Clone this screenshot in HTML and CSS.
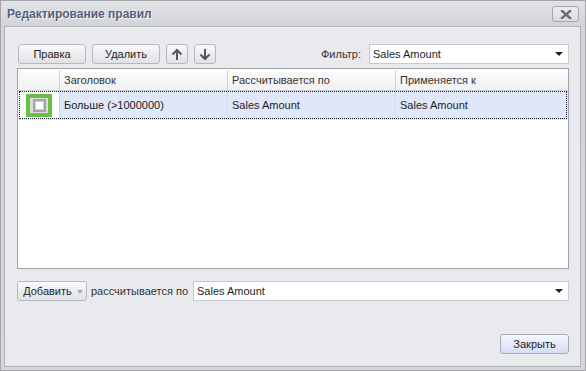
FILE: index.html
```html
<!DOCTYPE html>
<html lang="ru">
<head>
  <meta charset="UTF-8">
  <title>Редактирование правил</title>
  <link rel="stylesheet" href="styles.css">
</head>
<body>
  <div class="window">
    <div class="titlebar">
      <span class="title">Редактирование правил</span>
      <button class="close-x" aria-label="Закрыть">
        <svg width="12" height="9" viewBox="0 0 12 9"><path d="M2 1 L10 8 M10 1 L2 8" stroke="#6b6b73" stroke-width="2.4" stroke-linecap="square"/></svg>
      </button>
    </div>

    <div class="content">
      <div class="toolbar">
        <button class="btn btn-wide">Правка</button>
        <button class="btn btn-wide">Удалить</button>
        <button class="btn btn-icon" aria-label="Вверх">
          <svg width="12" height="13" viewBox="0 0 12 13"><path d="M6 12 V2 M1.5 6.5 L6 2 L10.5 6.5" fill="none" stroke="#555" stroke-width="2"/></svg>
        </button>
        <button class="btn btn-icon" aria-label="Вниз">
          <svg width="12" height="13" viewBox="0 0 12 13"><path d="M6 1 V11 M1.5 6.5 L6 11 L10.5 6.5" fill="none" stroke="#555" stroke-width="2"/></svg>
        </button>
        <span class="filter-label">Фильтр:</span>
        <div class="combo combo-filter">
          <span>Sales Amount</span>
          <span class="caret"></span>
        </div>
      </div>

      <div class="grid">
        <div class="grid-row grid-head">
          <div class="cell cell-ind"></div>
          <div class="cell cell-col">Заголовок</div>
          <div class="cell cell-col">Рассчитывается по</div>
          <div class="cell cell-col cell-last">Применяется к</div>
        </div>
        <div class="grid-row grid-data">
          <div class="cell cell-ind">
            <span class="check-focus"><span class="check"></span></span>
          </div>
          <div class="cell cell-col">Больше (&gt;1000000)</div>
          <div class="cell cell-col">Sales Amount</div>
          <div class="cell cell-col cell-last">Sales Amount</div>
          <div class="focus-rect"></div>
        </div>
      </div>

      <div class="add-row">
        <button class="btn btn-add">Добавить <span class="caret caret-light"></span></button>
        <span class="add-label">рассчитывается по</span>
        <div class="combo combo-add">
          <span>Sales Amount</span>
          <span class="caret"></span>
        </div>
      </div>

      <div class="footer">
        <button class="btn btn-default">Закрыть</button>
      </div>
    </div>
  </div>
</body>
</html>
```

FILE: styles.css
```css
body {
  margin: 0;
  font-family: 'Liberation Sans', Arial, sans-serif;
  font-size: 11px;
  color: #1e1e1e;
}
.window {
  width: 586px;
  height: 371px;
  box-sizing: border-box;
  border: 1px solid #a4a5ab;
  background: linear-gradient(#e2e2e6, #d3d4d9 25px, #d6d7dc);
  padding: 0 4px 3px 3px;
  display: flex;
  flex-direction: column;
}
.titlebar {
  height: 25px;
  display: flex;
  align-items: center;
  justify-content: space-between;
  padding: 0 2px 0 3px;
}
.title {
  font-weight: bold;
  font-size: 12px;
  color: #55617c;
  text-shadow: 1px 1px 0 #f4f4f6;
  margin-top: 1px;
}
.close-x {
  width: 27px;
  height: 16px;
  margin-top: 1px;
  padding: 0;
  border: 1px solid #a6a7ae;
  border-radius: 3px;
  background: linear-gradient(#ececef, #d9dadf);
  display: flex;
  align-items: center;
  justify-content: center;
}
.content {
  flex: 1;
  border: 1px solid #b2b3b9;
  background: #e9eaee;
  padding: 17px 11px 12px 12px;
  display: flex;
  flex-direction: column;
}

/* кнопки */
.btn {
  height: 20px;
  box-sizing: border-box;
  padding: 0;
  border: 1px solid #b7b8be;
  border-radius: 3px;
  background: linear-gradient(#fbfbfc, #ebebee 55%, #e1e2e6);
  font-family: inherit;
  font-size: 11px;
  color: #1e1e1e;
}
.btn-wide {
  width: 68px;
}
.btn-icon {
  width: 22px;
  display: flex;
  align-items: center;
  justify-content: center;
}
.btn-default {
  width: 69px;
  border-color: #a8abb6;
  background: linear-gradient(#f6f8fe, #e3e9fa 55%, #d6def6);
}

.toolbar {
  display: flex;
  align-items: center;
  gap: 6px;
  padding-left: 1px;
}
.filter-label {
  margin-left: auto;
  margin-right: 2px;
  color: #333;
}
.combo {
  height: 20px;
  box-sizing: border-box;
  background: #fff;
  border: 1px solid #c9cacf;
  display: flex;
  align-items: center;
  justify-content: space-between;
  padding: 0 5px 0 3px;
}
.combo-filter {
  width: 200px;
}
.caret {
  width: 0;
  height: 0;
  border-left: 4px solid transparent;
  border-right: 4px solid transparent;
  border-top: 4px solid #222;
}
.caret-light {
  display: inline-block;
  vertical-align: middle;
  border-top-color: #a5a5aa;
  border-left-width: 3.5px;
  border-right-width: 3.5px;
  margin-left: 2px;
}

/* таблица правил */
.grid {
  margin-top: 4px;
  height: 201px;
  box-sizing: border-box;
  border: 1px solid #a1a3aa;
  background: #fff;
}
.grid-row {
  display: flex;
  position: relative;
}
.grid-head {
  height: 22px;
  padding-top: 1px;
  background: linear-gradient(#fbfbfb, #f1f1f3);
  border-bottom: 1px solid #d2d3d7;
  box-sizing: border-box;
  color: #333;
}
.grid-data {
  height: 28px;
  border-bottom: 1px solid #e3e5ea;
}
.cell {
  display: flex;
  align-items: center;
  padding-left: 4px;
  box-sizing: border-box;
  border-right: 1px solid #d2d3d7;
}
.cell-ind {
  width: 42px;
  padding: 0;
}
.cell-col {
  width: 168px;
}
.cell-last {
  flex: 1;
  border-right: none;
}
.grid-data .cell-col {
  background: #dfe7f8;
  border-right-color: #d3daea;
}
.grid-data .cell-ind {
  justify-content: center;
  padding-left: 1px;
}
.check-focus {
  width: 26px;
  height: 23px;
  box-sizing: border-box;
  border: 4px solid #6abf48;
  background: #dcdcde;
  display: flex;
  align-items: center;
  justify-content: center;
}
.check {
  width: 13px;
  height: 13px;
  box-sizing: border-box;
  border: 2px solid #a4a4a8;
  background: #fff;
  box-shadow: inset 0 0 0 1px #cfcfd2;
}
.focus-rect {
  position: absolute;
  left: 1px;
  right: 1px;
  top: 0;
  bottom: 0;
  border: 1px dotted #1b1b30;
  pointer-events: none;
}

/* нижняя часть */
.add-row {
  margin-top: 12px;
  display: flex;
  align-items: center;
  gap: 4px;
}
.btn-add {
  width: 70px;
  padding-left: 2px;
}
.add-label {
  color: #333;
  margin-right: 1px;
}
.combo-add {
  flex: 1;
}
.footer {
  margin-top: auto;
  display: flex;
  justify-content: flex-end;
}
```
